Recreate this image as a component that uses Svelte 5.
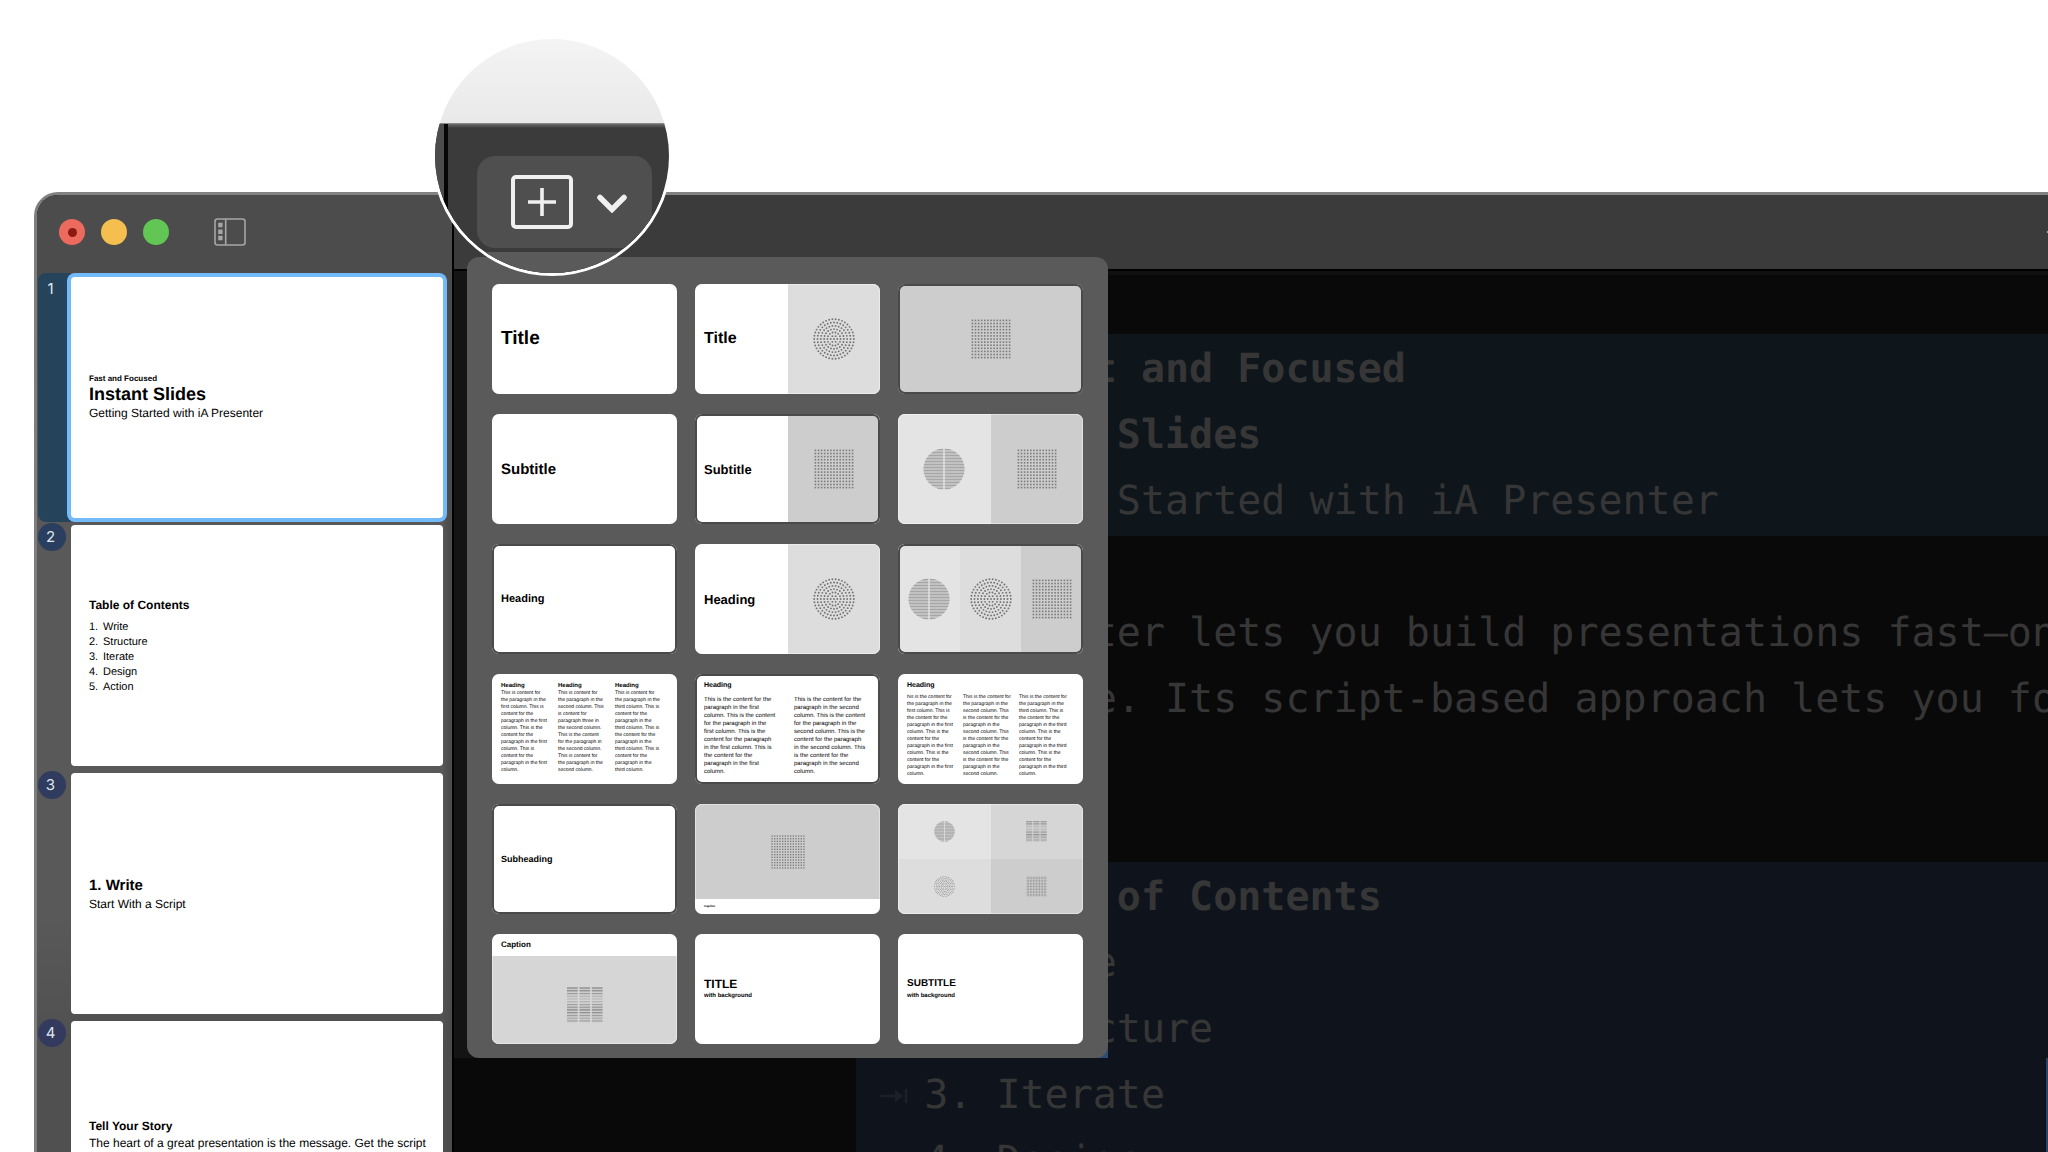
<script>
  const slides = [
    {
      color: "#26435c",
      active: true,
      lines: [
        { kind: "kicker", text: "Fast and Focused" },
        { kind: "title", text: "Instant Slides" },
        { kind: "sub", text: "Getting Started with iA Presenter" },
      ],
    },
    {
      color: "#2a3f5f",
      lines: [{ kind: "heading", text: "Table of Contents" }],
      list: ["Write", "Structure", "Iterate", "Design", "Action"],
    },
    {
      color: "#303c5e",
      lines: [
        { kind: "chapter", text: "1. Write" },
        { kind: "body", text: "Start With a Script" },
      ],
    },
    {
      color: "#343a5e",
      lines: [
        { kind: "heading", text: "Tell Your Story" },
        {
          kind: "body",
          text: "The heart of a great presentation is the message. Get the script right and the slides will follow.",
        },
      ],
    },
  ];

  const threeHeadings = [
    "This is content for\nthe paragraph in the\nfirst column. This is\ncontent for the\nparagraph in the first\ncolumn. This is the\ncontent for the\nparagraph in the first\ncolumn. This is\ncontent for the\nparagraph in the first\ncolumn.",
    "This is content for\nthe paragraph in the\nsecond column. This\nis content for\nparagraph three in\nthe second column.\nThis is the content\nfor the paragraph in\nthe second column.\nThis is content for\nthe paragraph in the\nsecond column.",
    "This is content for\nthe paragraph in the\nthird column. This is\ncontent for the\nparagraph in the\nthird column. This is\nthe content for the\nparagraph in the\nthird column. This is\ncontent for the\nparagraph in the\nthird column.",
  ];

  const twoColumns = [
    "This is the content for the\nparagraph in the first\ncolumn. This is the content\nfor the paragraph in the\nfirst column. This is the\ncontent for the paragraph\nin the first column. This is\nthe content for the\nparagraph in the first\ncolumn.",
    "This is the content for the\nparagraph in the second\ncolumn. This is the content\nfor the paragraph in the\nsecond column. This is the\ncontent for the paragraph\nin the second column. This\nis the content for the\nparagraph in the second\ncolumn.",
  ];

  const threeColumns = [
    "his is the content for\nthe paragraph in the\nfirst column. This is\nthe content for the\nparagraph in the first\ncolumn. This is the\ncontent for the\nparagraph in the first\ncolumn. This is the\ncontent for the\nparagraph in the first\ncolumn.",
    "This is the content for\nthe paragraph in the\nsecond column. This\nis the content for the\nparagraph in the\nsecond column. This\nis the content for the\nparagraph in the\nsecond column. This\nis the content for the\nparagraph in the\nsecond column.",
    "This is the content for\nthe paragraph in the\nthird column. This is\nthe content for the\nparagraph in the third\ncolumn. This is the\ncontent for the\nparagraph in the third\ncolumn. This is the\ncontent for the\nparagraph in the third\ncolumn.",
  ];

  const layouts = [
    { type: "text", text: "Title", size: "xl" },
    { type: "text", text: "Title", size: "lg", art: "rings" },
    { type: "media", panes: ["grid"], dark: true },
    { type: "text", text: "Subtitle", size: "md" },
    { type: "text", text: "Subtitle", size: "sm", art: "grid", dark: true },
    { type: "media", panes: ["globe", "grid"] },
    { type: "text", text: "Heading", size: "xs", dark: true },
    { type: "text", text: "Heading", size: "sm", art: "rings" },
    { type: "media", panes: ["globe", "rings", "grid"], dark: true },
    { type: "columns", columns: threeHeadings, headings: true },
    { type: "columns", title: "Heading", columns: twoColumns, wide: true, dark: true },
    { type: "columns", title: "Heading", columns: threeColumns },
    { type: "text", text: "Subheading", size: "xxs", dark: true },
    { type: "captionBelow", text: "Caption" },
    { type: "quad", panes: ["globe", "bars", "rings", "grid"] },
    { type: "captionAbove", text: "Caption" },
    { type: "text", text: "TITLE", size: "caps-lg", note: "with background" },
    { type: "text", text: "SUBTITLE", size: "caps-sm", note: "with background" },
  ];

  const steps = Array.from({ length: 13 }, (_, i) => i);

  // Concentric rings, six more dots on each one
  const ringDots = [{ x: 21, y: 21 }];
  for (let ring = 1; ring <= 6; ring++) {
    const count = ring * 6 + (ring > 1 ? 2 : 0);
    for (let i = 0; i < count; i++) {
      const a = (i / count) * Math.PI * 2;
      ringDots.push({
        x: 21 + Math.cos(a) * ring * 3.3,
        y: 21 + Math.sin(a) * ring * 3.3,
      });
    }
  }

  const globeRows = Array.from({ length: 14 }, (_, i) => {
    const y = 1.5 + i * 3;
    return { y, half: Math.sqrt(Math.max(0, 420 - (y - 21) ** 2)) };
  });

  const barTones = [0.42, 0.38, 0.3, 0.18, 0.14, 0.18, 0.28, 0.36, 0.44, 0.36, 0.3, 0.26, 0.28];
</script>

{#snippet art(kind, size = "normal")}
  <svg class="art {size}" viewBox="0 0 42 42" aria-hidden="true">
    {#if kind === "grid"}
      {#each steps as row}
        {#each steps as col}
          <rect x={1.6 + col * 3.1} y={1.6 + row * 3.1} width="1.6" height="1.6" fill="#7c7c7c" />
        {/each}
      {/each}
    {:else if kind === "rings"}
      {#each ringDots as dot}
        <circle cx={dot.x} cy={dot.y} r="0.95" fill="#747474" />
      {/each}
    {:else if kind === "globe"}
      <circle cx="21" cy="21" r="20.5" fill="#c2c2c2" />
      {#each globeRows as row}
        <rect x={21 - row.half} y={row.y - 0.5} width={row.half * 2} height="1" fill="#a6a6a6" />
      {/each}
      <rect x="20.3" y="0" width="1.4" height="42" fill="#e4e4e4" />
    {:else}
      {#each barTones as tone, i}
        {#each [0, 14.5, 29] as x}
          <rect {x} y={0.5 + i * 3.2} width="12.5" height="2.2" fill="#000" opacity={tone * 0.35} />
          <rect {x} y={0.5 + i * 3.2} width="12.5" height="1.1" fill="#000" opacity={tone * 0.7} />
        {/each}
      {/each}
    {/if}
  </svg>
{/snippet}

{#snippet tab()}
  <span class="tab">
    <svg viewBox="0 0 28 16" aria-hidden="true">
      <path d="M0 8h16M26 1v14" stroke="currentColor" stroke-width="2.5" />
      <path d="M15 2l8 6-8 6z" fill="currentColor" />
    </svg>
  </span>
{/snippet}

<div class="page">
  <div class="window">
    <aside class="sidebar">
      <header class="controls">
        <button class="light close" aria-label="Close"></button>
        <button class="light minimize" aria-label="Minimize"></button>
        <button class="light zoom" aria-label="Zoom"></button>
        <button class="toggle" aria-label="Toggle slide list">
          <svg viewBox="0 0 32 28" fill="none" aria-hidden="true">
            <rect x="1" y="1" width="30" height="26" rx="2.5" stroke="#a6a6a6" stroke-width="1.6" />
            <path d="M11.7 1v26" stroke="#a6a6a6" stroke-width="1.6" />
            <path d="M4.2 4.8h4.4v4.4H4.2zM4.2 11.6h4.4V16H4.2zM4.2 17.8h4.4v4.4H4.2z" fill="#a6a6a6" />
          </svg>
        </button>
      </header>

      <ol class="slides">
        {#each slides as slide, i}
          <li class="slide-row" class:active={slide.active}>
            <span class="gutter" style="background: {slide.color}">{i + 1}</span>
            <div class="slide">
              {#each slide.lines as line}
                <p class={line.kind}>{line.text}</p>
              {/each}
              {#if slide.list}
                <ol class="toc">
                  {#each slide.list as item, n}
                    <li><span>{n + 1}.</span>{item}</li>
                  {/each}
                </ol>
              {/if}
            </div>
          </li>
        {/each}
      </ol>
    </aside>

    <main class="main">
      <header class="toolbar">
        <svg class="back" viewBox="0 0 10 14" fill="none" aria-hidden="true">
          <path d="M9 1L2 7l7 6" stroke="#b5b5b5" stroke-width="2" />
        </svg>
      </header>

      <div class="editor">
        <div class="band first">
          <p class="strong">##### Fast and Focused</p>
          <p class="strong"># Instant Slides</p>
          <p>{@render tab()}Getting Started with iA Presenter</p>
        </div>
        <div class="script">
          <p>iA Presenter lets you build presentations fast—on</p>
          <p>any device. Its script-based approach lets you focus</p>
        </div>
        <div class="band second">
          <p class="strong">### Table of Contents</p>
          <p>{@render tab()}1. Write</p>
          <p>{@render tab()}2. Structure</p>
          <p>{@render tab()}3. Iterate</p>
          <p>{@render tab()}4. Design</p>
        </div>
      </div>

      <div class="shade"></div>
      <div class="edge"></div>
      <div class="popover">
        {#each layouts as layout}
          <button class="thumb {layout.type}" class:dark={layout.dark}>
            {#if layout.type === "text"}
              <span class="label {layout.size}">
                {layout.text}
                {#if layout.note}<small>{layout.note}</small>{/if}
              </span>
              {#if layout.art}
                <span class="pane {layout.art}">{@render art(layout.art)}</span>
              {/if}
            {:else if layout.type === "media"}
              {#each layout.panes as pane}
                <span class="pane {pane}">{@render art(pane)}</span>
              {/each}
            {:else if layout.type === "quad"}
              {#each layout.panes as pane}
                <span class="pane {pane}">{@render art(pane, "small")}</span>
              {/each}
            {:else if layout.type === "columns"}
              {#if layout.title}<b class="columns-title">{layout.title}</b>{/if}
              <span class="text-columns" class:wide={layout.wide} class:headed={layout.headings}>
                {#each layout.columns as column}
                  <span class="text-column">
                    {#if layout.headings}<b>Heading</b>{/if}
                    <span class="copy">{column}</span>
                  </span>
                {/each}
              </span>
            {:else if layout.type === "captionBelow"}
              <span class="pane grid">{@render art("grid", "medium")}</span>
              <span class="caption tiny">{layout.text}</span>
            {:else}
              <span class="caption">{layout.text}</span>
              <span class="pane bars">{@render art("bars", "medium")}</span>
            {/if}
          </button>
        {/each}
      </div>
    </main>
  </div>

  <div class="lens">
    <div class="lens-sky"></div>
    <div class="lens-bar">
      <div class="lens-side"></div>
      <div class="lens-tools">
        <div class="add-group">
          <button aria-label="Add slide">
            <svg width="62" height="54" viewBox="0 0 62 54" fill="none" stroke="#f0f0f0" aria-hidden="true">
              <rect x="2" y="2" width="58" height="50" rx="3" stroke-width="4" />
              <path d="M31 13v28M17 27h28" stroke-width="3.6" />
            </svg>
          </button>
          <button aria-label="Choose layout">
            <svg width="30" height="22" viewBox="0 0 30 22" fill="none" stroke="#f0f0f0" aria-hidden="true">
              <path d="M3 6.5l12 12 12-12" stroke-width="5.5" stroke-linecap="round" />
            </svg>
          </button>
        </div>
        <div class="lens-popover"></div>
      </div>
    </div>
  </div>
</div>

<style>
  :global(body) {
    margin: 0;
    background: #fff;
    overflow: hidden;
  }

  .page {
    position: relative;
    display: flex;
    box-sizing: border-box;
    height: 100vh;
    padding: 192px 0 0 34px;
    font-family: "Liberation Sans", Arial, sans-serif;
    text-rendering: geometricPrecision;
    color: #000;
  }

  .page p,
  .page ol {
    margin: 0;
    padding: 0;
    list-style: none;
  }

  .page button {
    margin: 0;
    padding: 0;
    border: 0;
    background: none;
    font-family: inherit;
    color: inherit;
    text-align: left;
    text-rendering: inherit;
  }

  .window {
    flex: 1;
    display: flex;
    min-width: 0;
    border-top: 3px solid #828282;
    border-left: 3px solid #7e7e7e;
    border-top-left-radius: 24px;
    overflow: hidden;
    background: #090909;
  }

  /* Slide list */
  .sidebar {
    flex: 0 0 415px;
    border-right: 2px solid #000;
    background:
      linear-gradient(90deg, transparent 405px, #4c4c4c 412px),
      linear-gradient(#4c4c4c 90px, #595959 340px, #595959 720px, #505050 850px);
  }

  .controls {
    display: flex;
    align-items: center;
    gap: 16px;
    height: 74px;
    padding: 0 22px;
  }

  .page .light {
    display: grid;
    place-items: center;
    width: 26px;
    height: 26px;
    border-radius: 50%;
  }

  .page .close {
    background: #ed6a5f;
  }

  .close::before {
    content: "";
    width: 9px;
    height: 9px;
    border-radius: 50%;
    background: #8c1a10;
  }

  .page .minimize {
    background: #f5bf4f;
  }

  .page .zoom {
    background: #62c655;
  }

  .page .toggle {
    width: 32px;
    height: 28px;
    margin-left: 29px;
  }

  .toggle svg {
    display: block;
  }

  .page .slides {
    display: flex;
    flex-direction: column;
    gap: 3px;
    padding: 6px 9px 0 1px;
  }

  .slide-row {
    display: flex;
    align-items: flex-start;
    padding: 2px 0;
  }

  .gutter {
    flex: none;
    width: 28px;
    height: 28px;
    margin: -2px 5px 0 0;
    box-sizing: border-box;
    padding-right: 3px;
    border-radius: 50%;
    font: 15px/28px Inter, sans-serif;
    text-align: center;
    color: #dfe8f0;
  }

  .active .gutter {
    align-self: stretch;
    width: 33px;
    height: auto;
    margin: -4px 0;
    padding: 2px 8px 0 0;
    border-radius: 8px 0 0 8px;
  }

  .slide {
    flex: 1;
    display: flex;
    flex-direction: column;
    justify-content: center;
    box-sizing: border-box;
    aspect-ratio: 372 / 241;
    padding: 0 9px 0 18px;
    border-radius: 4px;
    background: #fff;
    overflow: hidden;
  }

  .active .slide {
    box-shadow: 0 0 0 4px #73baf8;
  }

  .kicker {
    font-size: 8px;
    font-weight: 700;
    line-height: 10px;
  }

  .title {
    font-size: 18px;
    font-weight: 700;
    line-height: 20px;
  }

  .sub {
    font-size: 12px;
    line-height: 18px;
  }

  .heading {
    font-size: 12px;
    font-weight: 700;
    line-height: 18px;
  }

  .chapter {
    font-size: 15px;
    font-weight: 700;
    line-height: 20px;
  }

  .body {
    font-size: 12px;
    line-height: 16px;
  }

  .page .toc {
    padding-top: 6px;
    font-size: 11px;
    line-height: 15px;
  }

  .toc li {
    display: flex;
  }

  .toc span {
    width: 14px;
  }

  /* Editor */
  .main {
    position: relative;
    flex: 1;
    min-width: 0;
  }

  .toolbar {
    display: flex;
    align-items: center;
    justify-content: flex-end;
    height: 74px;
    border-bottom: 2px solid #000;
    background: #3b3b3b;
    overflow: hidden;
  }

  .back {
    flex: none;
    width: 10px;
    height: 14px;
    margin-right: -8px;
  }

  .editor {
    padding: 59px 0 0 402px;
    border-top: 4px solid #101010;
    font: 40px/66px "DejaVu Sans Mono", "Liberation Mono", monospace;
    color: #363636;
  }

  .editor p {
    height: 66px;
    white-space: pre;
  }

  .band,
  .script {
    padding: 2px 0 2px 20px;
    overflow: hidden;
  }

  .band.first {
    background: #0e151b;
  }

  .script {
    margin: 62px 0 128px;
  }

  .band.second {
    background: #0f141c;
  }

  .strong {
    font-weight: 700;
  }

  .tab {
    display: inline-block;
    width: 2ch;
    color: #1b2127;
  }

  .tab svg {
    width: 28px;
    height: 16px;
    margin-left: 4px;
    vertical-align: 4px;
  }

  /* Layout picker */
  .shade {
    position: absolute;
    top: 76px;
    left: 0;
    width: 654px;
    height: 787px;
    background: linear-gradient(90deg, #141414 50%, #2c4c77 50%);
  }

  .edge {
    position: absolute;
    top: 863px;
    right: 0;
    bottom: 0;
    width: 2px;
    background: #2b4463;
  }

  .popover {
    position: absolute;
    top: 62px;
    left: 13px;
    display: grid;
    grid-template-columns: repeat(3, 185px);
    grid-auto-rows: 110px;
    gap: 20px 18px;
    padding: 27px 25px 14px;
    border-radius: 12px;
    background: #5a5a5a;
  }

  .page .thumb {
    position: relative;
    display: flex;
    border-radius: 7px;
    background: #fff;
    overflow: hidden;
  }

  .thumb::after {
    content: "";
    position: absolute;
    inset: 0;
    border: 1px solid rgba(255, 255, 255, 0.4);
    border-radius: 7px;
  }

  .thumb.dark::after {
    inset: -1px;
    border: 3px solid #4a4a4a;
    border-radius: 8px;
  }

  .label {
    flex: 1 1 0;
    display: flex;
    flex-direction: column;
    align-self: center;
    min-width: 0;
    text-indent: 9px;
    font-weight: 700;
  }

  .label small {
    font-size: 6px;
    line-height: 10px;
  }

  .xl {
    font-size: 19px;
  }

  .lg {
    font-size: 16px;
  }

  .md {
    font-size: 15px;
  }

  .sm {
    font-size: 13px;
  }

  .xs {
    font-size: 11px;
  }

  .xxs {
    font-size: 9px;
  }

  .caps-lg {
    font-size: 12px;
    line-height: 14px;
  }

  .caps-sm {
    font-size: 10px;
    line-height: 14px;
  }

  .pane {
    flex: 1 1 0;
    display: grid;
    place-items: center;
  }

  .pane.grid {
    background: #cdcdcd;
  }

  .pane.rings {
    background: #dddddd;
  }

  .pane.globe {
    background: #e4e4e4;
  }

  .pane.bars {
    background: #d6d6d6;
  }

  .art {
    width: 42px;
    height: 42px;
  }

  .art.medium {
    width: 36px;
    height: 36px;
  }

  .art.small {
    width: 21px;
    height: 21px;
  }

  .page .quad {
    display: grid;
    grid-template: 1fr 1fr / 1fr 1fr;
  }

  .page .columns,
  .page .captionBelow,
  .page .captionAbove {
    flex-direction: column;
  }

  .page .columns {
    padding: 7px 9px 0;
  }

  .columns-title {
    font-size: 7px;
    line-height: 9px;
  }

  .text-columns {
    display: grid;
    grid-template-columns: repeat(3, 50px);
    gap: 6px;
    padding-top: 4px;
    font-size: 5px;
    line-height: 7px;
    white-space: pre;
  }

  .text-columns.wide {
    grid-template-columns: repeat(2, 84px);
    padding-top: 6px;
    font-size: 6px;
    line-height: 8px;
  }

  .text-columns.headed {
    grid-template-columns: repeat(3, 51px);
    padding-top: 1px;
  }

  .text-column {
    display: flex;
    flex-direction: column;
    min-width: 0;
  }

  .text-column b {
    font-size: 6px;
    line-height: 8px;
  }

  .caption {
    flex: none;
    padding-left: 9px;
    font-size: 8px;
    font-weight: 700;
    line-height: 22px;
  }

  .caption.tiny {
    font-size: 3px;
    line-height: 15px;
  }

  .captionAbove .pane {
    padding-top: 10px;
  }

  /* Magnifier over the toolbar */
  .lens {
    position: absolute;
    top: 36px;
    left: 432px;
    display: flex;
    flex-direction: column;
    width: 234px;
    height: 234px;
    border: 3px solid #fff;
    border-radius: 50%;
    overflow: hidden;
  }

  .lens-sky {
    flex: 0 0 84px;
    background: linear-gradient(#f4f4f4, #e9e9e9);
  }

  .lens-bar {
    flex: 1;
    display: flex;
    border-top: 1px solid #8a8a8a;
    background: linear-gradient(#6c6c6c, #3b3b3b 4px);
  }

  .lens-side {
    width: 9px;
    border-right: 4px solid #050505;
    background: #4c4c4c;
  }

  .lens-tools {
    flex: 1;
    display: flex;
    flex-direction: column;
    padding: 32px 0 0 29px;
  }

  .add-group {
    display: flex;
    align-items: center;
    gap: 24px;
    box-sizing: border-box;
    width: 175px;
    height: 92px;
    padding-left: 34px;
    border-radius: 18px;
    background: #4f4f4f;
  }

  .add-group svg {
    display: block;
  }

  .lens-popover {
    flex: 1;
    margin: 4px 0 0 -8px;
    border-top-left-radius: 14px;
    background: #5a5a5a;
  }
</style>
